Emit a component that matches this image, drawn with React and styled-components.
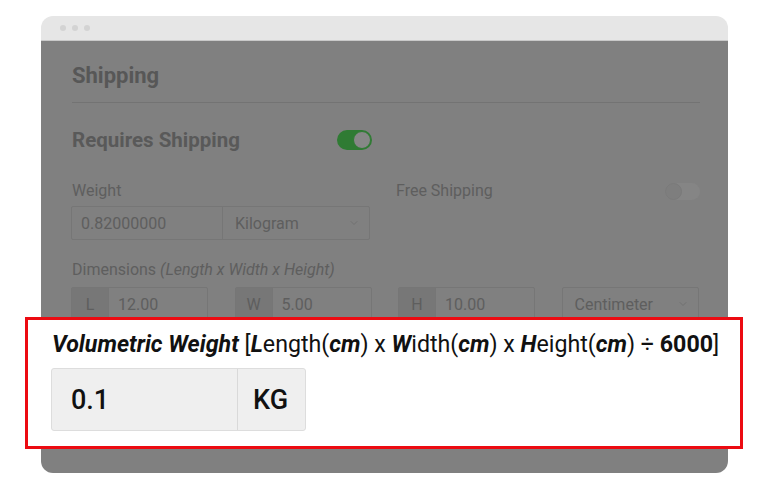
import React from 'react';
import styled, { createGlobalStyle } from 'styled-components';
import { ChevronDown } from 'lucide-react';

const GlobalStyle = createGlobalStyle`
  *, *::before, *::after {
    box-sizing: border-box;
  }
  html, body {
    margin: 0;
    padding: 0;
    background: #ffffff;
    font-family: 'Roboto', 'Liberation Sans', sans-serif;
  }
`;

const Page = styled.div`
  width: 768px;
  height: 488px;
  padding: 16px 40px 0 41px;
`;

const Window = styled.div`
  width: 687px;
  border-radius: 12px;
`;

const TitleBar = styled.div`
  height: 25px;
  background: #e6e6e6;
  border-radius: 12px 12px 0 0;
  border-bottom: 1px solid #c9c9c9;
  display: flex;
  align-items: center;
  gap: 6px;
  padding-left: 19px;
`;

const Dot = styled.span`
  width: 6px;
  height: 6px;
  border-radius: 50%;
  background: #d3d3d3;
`;

const Body = styled.div`
  background: #808080;
  border-radius: 0 0 12px 12px;
  padding: 22px 28px 24px 31px;
`;

const Heading = styled.h2`
  margin: 0;
  font-size: 22px;
  line-height: 26px;
  font-weight: 700;
  color: #575757;
  padding-bottom: 13px;
  border-bottom: 1px solid #737373;
`;

const Columns = styled.div`
  display: grid;
  grid-template-columns: 298px 1fr;
  column-gap: 26px;
  margin-top: ${p => p.$top || 0}px;
`;

const SwitchRow = styled.div`
  display: flex;
  align-items: center;
  justify-content: space-between;
  height: ${p => p.$h || 20}px;
`;

const Subhead = styled.span`
  font-size: 20.5px;
  font-weight: 700;
  color: #595959;
`;

const Label = styled.div`
  font-size: 16px;
  line-height: 18px;
  color: #5e5e5e;
  margin-top: ${p => p.$top || 0}px;
  em {
    font-style: italic;
  }
`;

const Toggle = styled.span`
  position: relative;
  width: 35px;
  height: ${p => p.$on ? 20 : 17}px;
  border-radius: 12px;
  background: ${p => p.$on ? '#2f7b33' : '#858585'};
  margin-right: ${p => p.$on ? -2 : 0}px;
  &::after {
    content: '';
    position: absolute;
    top: ${p => p.$on ? 1 : 0}px;
    left: ${p => p.$on ? 16 : 0}px;
    width: ${p => p.$on ? 18 : 17}px;
    height: ${p => p.$on ? 18 : 17}px;
    border-radius: 50%;
    background: ${p => p.$on ? '#878787' : '#7e7e7e'};
    border: 1px solid ${p => p.$on ? '#2f7b33' : '#7a7a7a'};
  }
`;

const InputGroup = styled.div`
  display: flex;
  height: 34px;
  margin-top: 6px;
  margin-left: -1px;
  border: 1px solid #767676;
  border-radius: 2px;
`;

const Cell = styled.div`
  display: flex;
  align-items: center;
  justify-content: ${p => p.$center ? 'center' : 'space-between'};
  flex: ${p => p.$w ? `0 0 ${p.$w}px` : 1};
  padding: 0 ${p => p.$center ? 0 : 9}px 0 ${p => p.$center ? 0 : p.$pl || 9}px;
  font-size: 16px;
  color: #5e5e5e;
  background: ${p => p.$prefix ? '#777777' : 'transparent'};
  & + & {
    border-left: 1px solid #767676;
  }
  svg {
    color: #6c6c6c;
  }
`;

const DimGrid = styled.div`
  display: grid;
  grid-template-columns: repeat(4, 136px);
  column-gap: 27.5px;
  margin-top: 8px;
  & > ${InputGroup} {
    margin-top: 0;
  }
`;

const Highlight = styled.div`
  position: relative;
  margin: -4px -43px 0 -47px;
  background: #ffffff;
  border: 3px solid #ec0b12;
  padding: 12px 24px 15px 24px;
`;

const Formula = styled.div`
  font-size: 23.2px;
  line-height: 24px;
  color: #111111;
  white-space: nowrap;
  b {
    font-weight: 700;
    font-style: italic;
  }
  strong {
    font-weight: 700;
  }
`;

const ResultBox = styled.div`
  display: flex;
  width: 255px;
  height: 63px;
  margin-top: 12px;
  margin-left: -1px;
  background: #efefef;
  border: 1px solid #dddddd;
  border-radius: 3px;
`;

const ResultCell = styled.div`
  display: flex;
  align-items: center;
  flex: ${p => p.$w ? `0 0 ${p.$w}px` : 1};
  padding-left: ${p => p.$pad}px;
  font-size: 27px;
  font-weight: 500;
  color: #111111;
  & + & {
    border-left: 1px solid #d9d9d9;
  }
`;

const dims = [
  { key: 'L', value: '12.00' },
  { key: 'W', value: '5.00' },
  { key: 'H', value: '10.00' },
];

export default function App() {
  return (
    <Page>
      <GlobalStyle />
      <Window>
        <TitleBar>
          <Dot />
          <Dot />
          <Dot />
        </TitleBar>
        <Body>
          <Heading>Shipping</Heading>
          <Columns $top={27}>
            <SwitchRow>
              <Subhead>Requires Shipping</Subhead>
              <Toggle $on />
            </SwitchRow>
          </Columns>
          <Columns $top={32}>
            <div>
              <Label>Weight</Label>
              <InputGroup>
                <Cell $w={150}>0.82000000</Cell>
                <Cell $pl={12}>
                  Kilogram
                  <ChevronDown size={12} strokeWidth={1.5} />
                </Cell>
              </InputGroup>
            </div>
            <SwitchRow $h={18}>
              <Label>Free Shipping</Label>
              <Toggle />
            </SwitchRow>
          </Columns>
          <Label $top={21}>
            Dimensions <em>(Length x Width x Height)</em>
          </Label>
          <DimGrid>
            {dims.map(d => (
              <InputGroup key={d.key}>
                <Cell $prefix $center $w={36}>{d.key}</Cell>
                <Cell>{d.value}</Cell>
              </InputGroup>
            ))}
            <InputGroup>
              <Cell $pl={12}>
                Centimeter
                <ChevronDown size={12} strokeWidth={1.5} />
              </Cell>
            </InputGroup>
          </DimGrid>
          <Highlight>
            <Formula>
              <b>Volumetric Weight</b> [<b>L</b>ength(<b>cm</b>) x <b>W</b>idth(<b>cm</b>) x <b>H</b>eight(<b>cm</b>) ÷ <strong>6000</strong>]
            </Formula>
            <ResultBox>
              <ResultCell $w={185} $pad={19}>0.1</ResultCell>
              <ResultCell $pad={15}>KG</ResultCell>
            </ResultBox>
          </Highlight>
        </Body>
      </Window>
    </Page>
  );
}
